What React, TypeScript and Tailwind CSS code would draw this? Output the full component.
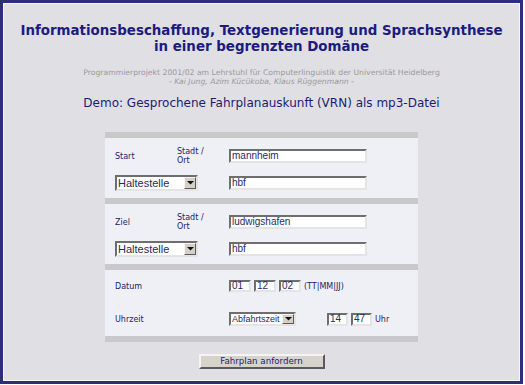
import React from "react";

const label = "font-['DejaVu_Sans',Verdana,sans-serif] text-[8px] leading-[9px] text-[#22226e]";
const inset =
  "bg-white border-2 border-t-[#6e6e6e] border-l-[#6e6e6e] border-r-[#e4e4e4] border-b-[#e4e4e4] font-['Liberation_Sans',Arial,sans-serif] leading-none";

function Field({ value, className }: { value: string; className: string }) {
  return <div className={`flex items-center pl-[1px] text-[10px] text-[#2a2a66] ${inset} ${className}`}>{value}</div>;
}

function Select({ value, className, text }: { value: string; className: string; text: string }) {
  return (
    <div className={`flex items-center text-[#2a2a55] ${inset} ${text} ${className}`}>
      <span className="flex-1 overflow-hidden whitespace-nowrap pl-[1px]">{value}</span>
      <span className="flex h-full w-[12px] shrink-0 items-center justify-center border border-t-[#f4f4f4] border-l-[#f4f4f4] border-r-[#5a5a5a] border-b-[#5a5a5a] bg-[#d4d0c8]">
        <svg width="7" height="4" viewBox="0 0 7 4">
          <path d="M0 0h7L3.5 3.5z" fill="#111" />
        </svg>
      </span>
    </div>
  );
}

function Bar() {
  return <div className="h-[6px] bg-[#c9c9cc]" />;
}

function Place({ name, city }: { name: string; city: string }) {
  return (
    <div className="grid grid-cols-[62px_52px_1fr] items-center gap-y-[10px] pl-[10px] pt-[9px] pb-[7px]">
      <div className={label}>{name}</div>
      <div className={label}>
        Stadt /<br />
        Ort
      </div>
      <Field value={city} className="h-[14px] w-[138px]" />
      <Select value="Haltestelle" text="text-[11px]" className="col-span-2 h-[16px] w-[83px]" />
      <Field value="hbf" className="h-[14px] w-[138px]" />
    </div>
  );
}

export default function App() {
  return (
    <div className="h-[385px] w-[525px] bg-white">
      <div className="h-[384px] w-[523px] border-[3px] border-[#2e2e78] bg-[#e0dfe4] shadow-[inset_1px_1px_0_#f6f6fa,inset_-1px_-1px_0_#f6f6fa]">
        <div className="pt-[20px] text-center">
          <h1 className="font-['DejaVu_Sans',Verdana,sans-serif] text-[13.4px] font-bold leading-[16px] text-[#1b1b80]">
            Informationsbeschaffung, Textgenerierung und Sprachsynthese
            <br />
            in einer begrenzten Domäne
          </h1>
          <div className="mt-[13px] font-['DejaVu_Sans',Verdana,sans-serif] text-[7.7px] leading-[9px] text-[#9a9a9e]">
            Programmierprojekt 2001/02 am Lehrstuhl für Computerlinguistik der Universität Heidelberg
            <br />
            <span className="italic">- Kai Jung, Azim Kücükoba, Klaus Rüggenmann -</span>
          </div>
          <div className="mt-[10px] font-['DejaVu_Sans',Verdana,sans-serif] text-[12px] leading-[15px] text-[#1b1b75]">
            Demo: Gesprochene Fahrplanauskunft (VRN) als mp3-Datei
          </div>
        </div>

        <div className="mx-auto mt-[21px] w-[313px] bg-[#eef0f5]">
          <Bar />
          <Place name="Start" city="mannheim" />
          <Bar />
          <Place name="Ziel" city="ludwigshafen" />
          <Bar />
          <div className="grid grid-cols-[114px_1fr] items-center gap-y-[20px] pl-[10px] pt-[10px] pb-[10px]">
            <div className={label}>Datum</div>
            <div className="flex items-center gap-[3px]">
              <Field value="01" className="h-[12px] w-[22px]" />
              <Field value="12" className="h-[12px] w-[22px]" />
              <Field value="02" className="h-[12px] w-[22px]" />
              <span className={label}>(TT|MM|JJ)</span>
            </div>
            <div className={label}>Uhrzeit</div>
            <div className="flex items-center">
              <Select value="Abfahrtszeit" text="text-[9px]" className="h-[14px] w-[67px]" />
              <div className="ml-[31px] flex items-center gap-[3px]">
                <Field value="14" className="h-[13px] w-[21px]" />
                <Field value="47" className="h-[13px] w-[21px]" />
                <span className={label}>Uhr</span>
              </div>
            </div>
          </div>
          <Bar />
        </div>

        <div className="mt-[12px] flex justify-center">
          <button className="h-[15px] w-[126px] border-2 border-t-[#f4f4f4] border-l-[#f4f4f4] border-r-[#5a5a5a] border-b-[#5a5a5a] bg-[#d6d3cc] font-['DejaVu_Sans',Verdana,sans-serif] text-[8.7px] leading-none text-[#22226e]">
            Fahrplan anfordern
          </button>
        </div>
      </div>
    </div>
  );
}
